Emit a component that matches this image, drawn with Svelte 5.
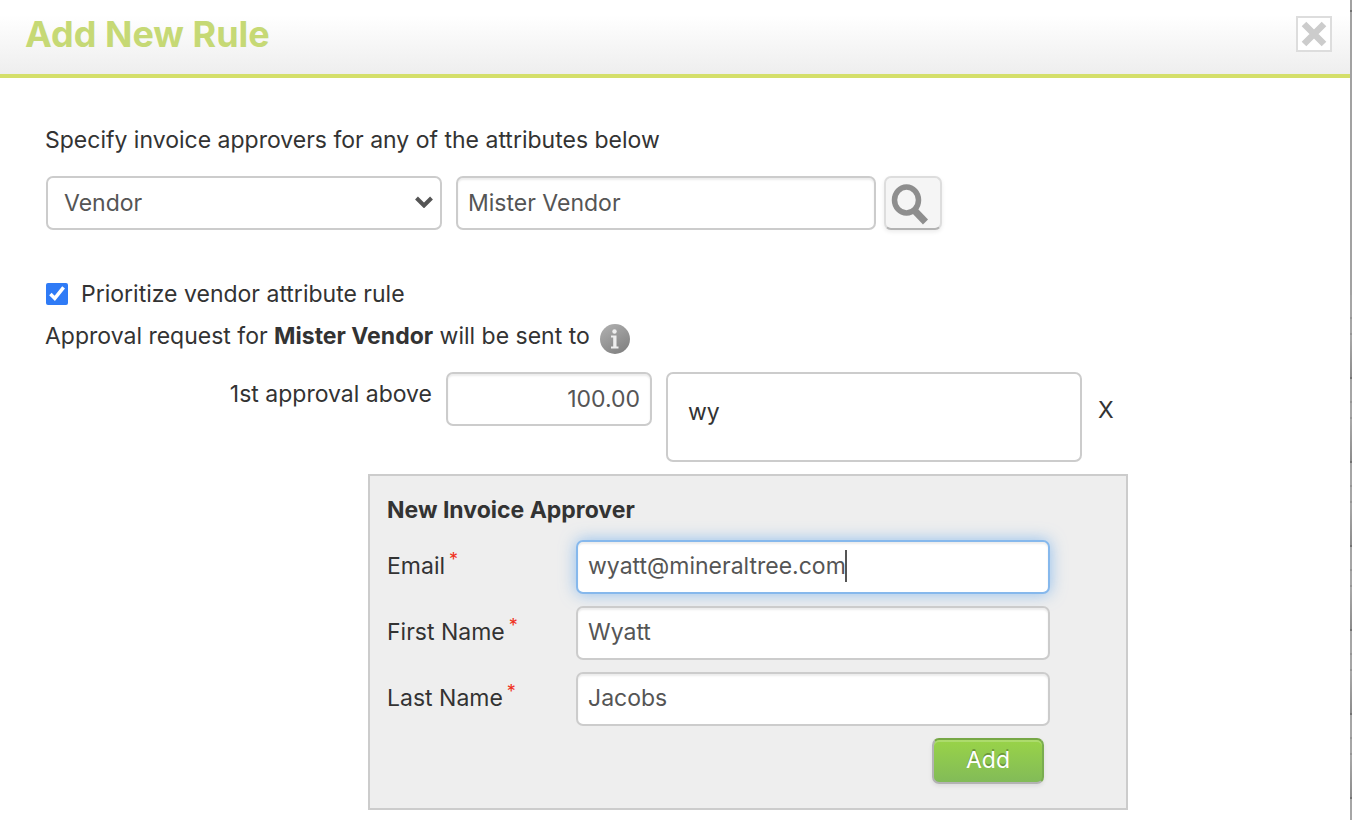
<script>
	import { onMount, tick } from 'svelte';

	let attribute = $state('Vendor');
	let vendor = $state('Mister Vendor');
	let prioritize = $state(true);
	let threshold = $state('100.00');
	let approver = $state('wy');
	let person = $state({
		email: 'wyatt@mineraltree.com',
		first: 'Wyatt',
		last: 'Jacobs'
	});

	const fields = [
		{ key: 'email', label: 'Email', type: 'text' },
		{ key: 'first', label: 'First Name', type: 'text' },
		{ key: 'last', label: 'Last Name', type: 'text' }
	];

	let form;
	let focused = $state('email');
	let caretX = $state(0);

	// The browser caret is hidden, so the text cursor is placed by hand
	function placeCaret(input) {
		const style = getComputedStyle(input);
		const ctx = document.createElement('canvas').getContext('2d');
		ctx.font = `${style.fontSize} ${style.fontFamily}`;
		const before = input.value.slice(0, input.selectionEnd);
		caretX = Math.round(ctx.measureText(before).width) + 11;
	}

	function onFocus(event, key) {
		focused = key;
		placeCaret(event.target);
	}

	onMount(async () => {
		await tick();
		const input = form.querySelector('input');
		input.focus();
		input.setSelectionRange(input.value.length, input.value.length);
		placeCaret(input);
	});
</script>

<div class="dialog">
	<header>
		<h1>Add New Rule</h1>
		<button class="close" aria-label="Close">
			<svg viewBox="0 0 32 32" width="32" height="32">
				<path d="M6 6L26 26M26 6L6 26" stroke="#ccc" stroke-width="6.500" />
			</svg>
		</button>
	</header>

	<main>
		<p>Specify invoice approvers for any of the attributes below</p>

		<div class="search-row">
			<div class="select-wrap">
				<select bind:value={attribute} aria-label="Attribute">
					<option>Vendor</option>
					<option>Department</option>
				</select>
				<svg class="chevron" viewBox="0 0 18 12" width="18" height="12">
					<path d="M1.500 2L9 9.500L16.500 2" fill="none" stroke="#555" stroke-width="4" />
				</svg>
			</div>
			<input class="vendor" type="text" bind:value={vendor} aria-label="Vendor name" />
			<button class="search" aria-label="Search">
				<svg viewBox="0 0 40 42" width="40" height="42">
					<ellipse cx="16.500" cy="16" rx="12" ry="13" fill="none" stroke="#8e8e8e" stroke-width="5.500" />
					<path d="M24 26L35.500 38" stroke="#8e8e8e" stroke-width="7" />
				</svg>
			</button>
		</div>

		<label class="check">
			<input type="checkbox" bind:checked={prioritize} />
			<span>Prioritize vendor attribute rule</span>
		</label>

		<p class="sent-to">
			<span>Approval request for <b>{vendor}</b> will be sent to</span>
			<svg viewBox="0 0 30 30" width="30" height="30">
				<defs>
					<linearGradient id="info-fill" x1="0" y1="0" x2="0.600" y2="1">
						<stop offset="0" stop-color="#b2b2b2" />
						<stop offset="1" stop-color="#848484" />
					</linearGradient>
				</defs>
				<circle cx="15" cy="15" r="15" fill="url(#info-fill)" />
				<circle cx="14.500" cy="7.500" r="2.200" fill="#eee" />
				<path d="M11 11.500h5.500v11h2v2h-7.500v-2h2.200v-9h-2.200z" fill="#eee" />
			</svg>
		</p>

		<div class="approval">
			<label for="threshold">1st approval above</label>
			<input id="threshold" class="amount" type="text" bind:value={threshold} />
			<input class="approver" type="text" bind:value={approver} aria-label="Approver" />
			<button class="remove" aria-label="Remove approval">X</button>
		</div>

		<form bind:this={form} onsubmit={(e) => e.preventDefault()}>
			<h2>New Invoice Approver</h2>
			{#each fields as field}
				<div class="field">
					<label for={field.key}>{field.label}<span class="star">*</span></label>
					<div class="input-wrap">
						<input
							id={field.key}
							class:active={focused === field.key}
							type={field.type}
							bind:value={person[field.key]}
							onfocus={(e) => onFocus(e, field.key)}
							oninput={(e) => placeCaret(e.target)}
							onkeyup={(e) => placeCaret(e.target)}
							onclick={(e) => placeCaret(e.target)}
						/>
						{#if focused === field.key}
							<span class="caret" style="left: {caretX}px"></span>
						{/if}
					</div>
				</div>
			{/each}
			<div class="actions">
				<button class="add">Add</button>
			</div>
		</form>
	</main>
</div>

<style>
	:global(body) {
		margin: 0;
		background: #fff;
	}

	.dialog {
		box-sizing: border-box;
		min-height: 100vh;
		padding-right: 2px;
		color: #333;
		font-family: Inter, 'Liberation Sans', sans-serif;
		font-size: 23px;
		line-height: 32px;
		/* edge of the grid behind the dialog */
		background:
			linear-gradient(#727272, #727272) right 10px / 2px 2px no-repeat,
			repeating-linear-gradient(#a6a6a6 0 22px, #959595 22px 24px, #a6a6a6 24px 38px, #959595 38px 40px, #a9a9a9 40px, #8c8c8c 82px, #727272 82px 84px)
			right 295px / 2px 100% no-repeat,
			linear-gradient(#a2a2a2, #a2a2a2) right / 2px 100% no-repeat;
	}

	header {
		display: flex;
		align-items: center;
		justify-content: space-between;
		box-sizing: border-box;
		height: 78px;
		padding: 0 18px 6px 25px;
		border-bottom: 4px solid #d4df6a;
		background: linear-gradient(#fff 20%, #eee);
	}

	h1 {
		margin: 0;
		color: #c6d975;
		font-size: 36px;
		font-weight: 700;
		line-height: 48px;
	}

	button,
	input,
	select {
		box-sizing: border-box;
		font: inherit;
	}

	.close {
		display: flex;
		width: 36px;
		height: 36px;
		padding: 0;
		border: 2px solid #ddd;
		background: #fff;
	}

	main {
		padding: 46px 45px 10px;
		background: #fff;
	}

	p {
		margin: 0;
	}

	input[type='text'],
	select {
		height: 54px;
		padding: 0 10px;
		border: 2px solid #ccc;
		border-radius: 7px;
		outline: none;
		background: #fff;
		box-shadow: inset 0 2px 2px rgba(0, 0, 0, 0.08);
		color: #555;
		caret-color: transparent;
	}

	.search-row {
		display: flex;
		margin: 20px 0 48px 1px;
	}

	.select-wrap {
		position: relative;
		width: 396px;
		margin-right: 14px;
	}

	select {
		width: 100%;
		padding: 0 16px;
		box-shadow: none;
		appearance: none;
	}

	.chevron {
		position: absolute;
		top: 20px;
		right: 9px;
		pointer-events: none;
	}

	.vendor {
		width: 420px;
		margin-right: 8px;
	}

	.search {
		width: 58px;
		height: 54px;
		padding: 4px 0 0 4px;
		border: 2px solid #ddd;
		border-bottom-color: #b3b3b3;
		border-radius: 7px;
		background: #f5f5f5;
		box-shadow: 0 2px 4px rgba(0, 0, 0, 0.08);
		line-height: 0;
		text-align: left;
	}

	.check {
		display: flex;
		align-items: center;
		gap: 13px;
		width: max-content;
		margin-bottom: 10px;
	}

	.check input {
		width: 22px;
		height: 22px;
		margin: 0 0 0 1px;
		accent-color: #2f7bf6;
	}

	.sent-to {
		display: flex;
		gap: 10px;
	}

	.sent-to svg {
		margin-top: 4px;
	}

	.approval {
		display: flex;
		margin-top: 18px;
	}

	.approval label {
		width: 387px;
		margin: 6px 14px 0 0;
		text-align: right;
	}

	.approval .amount {
		width: 206px;
		margin-right: 14px;
		text-align: right;
	}

	.approval .approver {
		width: 416px;
		height: 90px;
		padding: 0 20px 10px;
		box-shadow: none;
		color: #333;
	}

	.remove {
		height: 32px;
		margin: 22px 0 0 16px;
		padding: 0;
		border: 0;
		background: none;
		color: #333;
	}

	form {
		box-sizing: border-box;
		width: 760px;
		margin: 12px 0 0 323px;
		padding: 18px 17px 24px;
		border: 2px solid #ccc;
		background: #eee;
	}

	h2 {
		margin: 0 0 14px;
		font-size: 23px;
		font-weight: 700;
		line-height: 32px;
	}

	.field {
		display: flex;
		margin-bottom: 12px;
	}

	.field label {
		width: 189px;
		padding-top: 10px;
	}

	.star {
		margin-left: 4px;
		color: #f03020;
		font-size: 18px;
		line-height: 16px;
		vertical-align: 8px;
	}

	.input-wrap {
		position: relative;
		width: 474px;
	}

	.input-wrap input {
		display: block;
		width: 100%;
		padding-bottom: 2px;
	}

	.input-wrap input.active {
		border-color: #86b8ec;
		box-shadow:
			inset 0 2px 2px rgba(0, 0, 0, 0.08),
			0 0 16px rgba(82, 158, 236, 0.6);
	}

	.caret {
		position: absolute;
		top: 10px;
		width: 2px;
		height: 32px;
		background: #555;
	}

	.actions {
		display: flex;
		justify-content: flex-end;
		padding-right: 65px;
	}

	.add {
		width: 112px;
		height: 46px;
		padding: 0 0 2px;
		border: 2px solid #b3b3b3;
		border-top-color: #76a745;
		border-right-color: #7aad50;
		border-radius: 7px;
		background: linear-gradient(#99d348, #82bb58);
		box-shadow:
			inset 0 2px 0 rgba(255, 255, 255, 0.2),
			0 2px 4px rgba(0, 0, 0, 0.08);
		color: #fff;
		text-shadow: 0 -2px 0 rgba(0, 0, 0, 0.25);
	}
</style>
